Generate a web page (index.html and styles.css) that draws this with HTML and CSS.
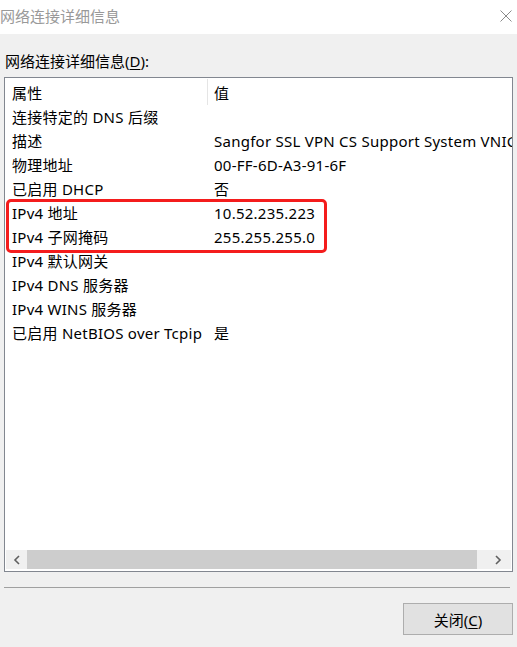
FILE: index.html
```html
<!DOCTYPE html>
<html lang="zh-CN">
<head>
<meta charset="utf-8">
<title>网络连接详细信息</title>
<link rel="stylesheet" href="styles.css">
</head>
<body>
<div class="window">
  <div class="titlebar">
    <span class="title">网络连接详细信息</span>
    <svg class="close" width="12" height="12" viewBox="0 0 12 12"><path d="M0.5 0.5 L11.5 11.5 M11.5 0.5 L0.5 11.5" stroke="#8a8a8a" stroke-width="1" fill="none"/></svg>
  </div>
  <div class="content">
    <div class="label">网络连接详细信息(<u>D</u>):</div>
    <div class="listview">
      <div class="rows">
        <div class="row header"><span class="c1">属性</span><span class="divider"></span><span class="c2">值</span></div>
        <div class="row"><span class="c1">连接特定的 DNS 后缀</span><span class="c2"></span></div>
        <div class="row"><span class="c1">描述</span><span class="c2">Sangfor SSL VPN CS Support System VNIC</span></div>
        <div class="row"><span class="c1">物理地址</span><span class="c2">00-FF-6D-A3-91-6F</span></div>
        <div class="row"><span class="c1">已启用 DHCP</span><span class="c2">否</span></div>
        <div class="row"><span class="c1">IPv4 地址</span><span class="c2">10.52.235.223</span></div>
        <div class="row"><span class="c1">IPv4 子网掩码</span><span class="c2">255.255.255.0</span></div>
        <div class="row"><span class="c1">IPv4 默认网关</span><span class="c2"></span></div>
        <div class="row"><span class="c1">IPv4 DNS 服务器</span><span class="c2"></span></div>
        <div class="row"><span class="c1">IPv4 WINS 服务器</span><span class="c2"></span></div>
        <div class="row"><span class="c1">已启用 NetBIOS over Tcpip</span><span class="c2">是</span></div>
      </div>
      <div class="hscroll">
        <div class="arrow"><svg width="8" height="10" viewBox="0 0 8 10"><path d="M6 1 L2 5 L6 9" stroke="#606060" stroke-width="1.6" fill="none"/></svg></div>
        <div class="thumb"></div>
        <div class="arrow right"><svg width="8" height="10" viewBox="0 0 8 10"><path d="M2 1 L6 5 L2 9" stroke="#606060" stroke-width="1.6" fill="none"/></svg></div>
      </div>
    </div>
    <div class="separator"></div>
    <div class="footer">
      <button class="btn">关闭(<u>C</u>)</button>
    </div>
  </div>
  <div class="highlight"></div>
</div>
</body>
</html>
```
FILE: styles.css
```css
* { box-sizing: border-box; }
html, body { margin: 0; padding: 0; }
body {
  width: 517px;
  height: 647px;
  background: #f0f0f0;
  font-family: "Noto Sans", "Noto Sans CJK SC", sans-serif;
  font-size: 15px;
  color: #000;
  overflow: hidden;
}
.window { position: relative; width: 517px; height: 647px; }
.titlebar {
  height: 34px;
  background: #fff;
  display: flex;
  align-items: center;
  justify-content: space-between;
  padding: 0 5px 0 0;
}
.title { color: #999; font-size: 15px; line-height: 20px; margin-top: -2px; }
.close { margin-top: -3px; }
.content { padding: 0 4px; }
.label { margin-top: 15px; height: 24px; line-height: 24px; padding-left: 1px; }
.label u, .btn u { text-decoration-thickness: 1px; text-underline-offset: 2px; }
.listview {
  margin-top: 4px;
  width: 509px;
  height: 495px;
  border: 1px solid #828790;
  background: #fff;
  display: flex;
  flex-direction: column;
  overflow: hidden;
}
.rows { flex: 1; padding-top: 3px; overflow: hidden; letter-spacing: 0.25px; }
.row {
  display: flex;
  height: 24px;
  line-height: 24px;
  white-space: nowrap;
  position: relative;
}
.c1 { width: 202px; flex: none; padding-left: 7px; overflow: hidden; }
.c2 { padding-left: 7px; }
.divider {
  position: absolute;
  left: 202px;
  top: -2px;
  width: 1px;
  height: 26px;
  background: #e5e5e5;
}
.hscroll {
  height: 19px;
  margin: 0 1px 2px 1px;
  background: #f0f0f0;
  display: flex;
  flex: none;
}
.arrow { width: 21px; display: flex; align-items: center; justify-content: center; flex: none; }
.arrow.right { width: 34px; padding-left: 8px; }
.thumb { flex: 1; background: #cdcdcd; }
.separator {
  margin-top: 15px;
  height: 1px;
  width: 506px;
  background: #a0a0a0;
}
.footer { display: flex; justify-content: flex-end; margin-top: 15px; }
.btn {
  width: 110px;
  height: 32px;
  background: #e1e1e1;
  border: 1px solid #adadad;
  font-family: inherit;
  font-size: 15px;
  color: #000;
  padding: 0;
}
.highlight {
  position: absolute;
  left: 6px;
  top: 199px;
  width: 321px;
  height: 54px;
  border: 3px solid #f41c1c;
  border-radius: 5px;
}
```
